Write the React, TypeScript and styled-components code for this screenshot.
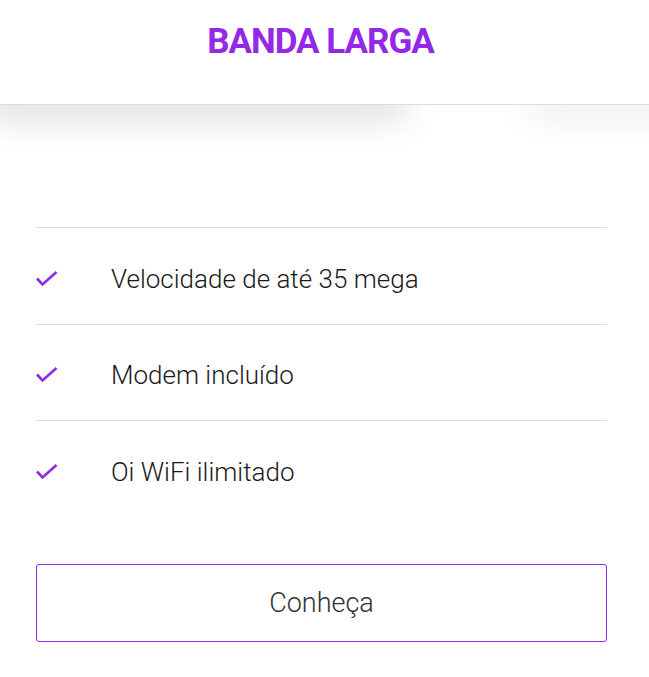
import React from "react";
import styled, { createGlobalStyle } from "styled-components";

const Global = createGlobalStyle`
  html, body { margin: 0; padding: 0; background: #fff; }
  body { font-family: Roboto, "Noto Sans", sans-serif; }
  * { box-sizing: border-box; }
`;

const Page = styled.div`
  width: 649px;
  min-height: 677px;
  background: #fff;
  overflow: hidden;
`;

const Header = styled.header`
  height: 105px;
  border-bottom: 1px solid #dcdcdc;
  display: flex;
  justify-content: center;
  padding-top: 20px;
  padding-right: 8px;
  background: #fff;
  position: relative;
  z-index: 1;
`;

const Title = styled.h1`
  margin: 0;
  font-family: Roboto, sans-serif;
  font-weight: 700;
  font-size: 35px;
  line-height: 44px;
  color: #9428e6;
  letter-spacing: -1px;
`;

const ShadowZone = styled.div`
  position: relative;
  height: 0;
`;

const ShadowBlob = styled.div<{ $left: number; $width: number; $alpha: number }>`
  position: absolute;
  top: -30px;
  left: ${(p) => p.$left}px;
  width: ${(p) => p.$width}px;
  height: 30px;
  border-radius: 40px;
  box-shadow: 0 14px 34px rgba(0, 0, 0, ${(p) => p.$alpha});
`;

const Content = styled.main`
  padding: 122px 42px 0 36px;
`;

const List = styled.ul`
  list-style: none;
  margin: 0;
  padding: 0;
`;

const Item = styled.li`
  height: 96.5px;
  border-top: 1px solid #dedede;
  display: flex;
  align-items: center;
  padding-top: 6px;
`;

const Check = styled.svg`
  width: 22px;
  height: 16px;
  flex: none;
  margin-right: 53px;
`;

const ItemText = styled.span`
  font-family: Roboto, sans-serif;
  font-weight: 300;
  font-size: 26px;
  color: #1a1a1a;
`;

const Button = styled.button`
  margin-top: 47px;
  width: 571px;
  height: 78px;
  border: 1px solid #9428e6;
  border-radius: 3px;
  background: #fff;
  font-family: Roboto, sans-serif;
  font-weight: 300;
  font-size: 27px;
  color: #333;
  display: flex;
  align-items: center;
  justify-content: center;
  padding: 0;
  cursor: pointer;
`;

const items = ["Velocidade de até 35 mega", "Modem incluído", "Oi WiFi ilimitado"];

export default function App() {
  return (
    <Page>
      <Global />
      <Header>
        <Title>BANDA LARGA</Title>
      </Header>
      <ShadowZone>
        <ShadowBlob $left={-20} $width={430} $alpha={0.14} />
        <ShadowBlob $left={525} $width={170} $alpha={0.07} />
      </ShadowZone>
      <Content>
        <List>
          {items.map((t) => (
            <Item key={t}>
              <Check viewBox="0 0 22 16">
                <path d="M1 7.5 L6.5 13.5 L20.5 1" fill="none" stroke="#9428e6" strokeWidth="2.6" />
              </Check>
              <ItemText>{t}</ItemText>
            </Item>
          ))}
        </List>
        <Button>Conheça</Button>
      </Content>
    </Page>
  );
}
